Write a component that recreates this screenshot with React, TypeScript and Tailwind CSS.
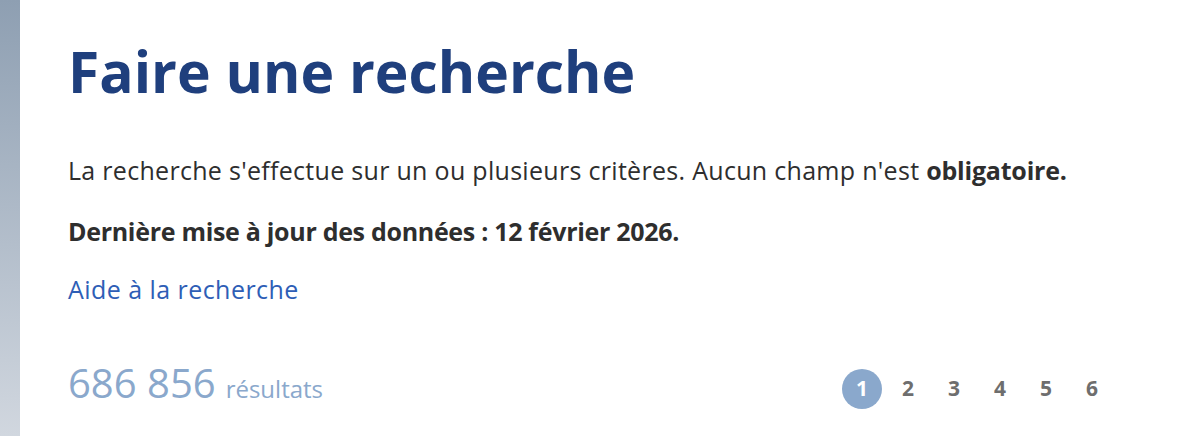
export default function App() {
  const pages = [1, 2, 3, 4, 5, 6];
  return (
    <div className="flex h-[436px] w-[1200px] overflow-hidden bg-white" style={{ fontFamily: "'Open Sans', 'Noto Sans', sans-serif" }}>
      <div className="w-[20px] shrink-0 bg-gradient-to-b from-[#8e9fb2] to-[#d1d7df]" />
      <div className="flex flex-1 flex-col pl-[48px] pr-[88px] pt-[37px]">
        <h1 className="text-[57px] font-bold leading-[68px] text-[#1f3f7d]">Faire une recherche</h1>
        <p className="mt-[47px] text-[25px] leading-[36px] tracking-[0.3px] text-[#2e2e2e]">
          La recherche s'effectue sur un ou plusieurs critères. Aucun champ n'est{" "}
          <strong className="tracking-[-0.2px]">obligatoire.</strong>
        </p>
        <p className="mt-[25px] text-[25px] font-bold leading-[36px] tracking-[-0.3px] text-[#2e2e2e]">
          Dernière mise à jour des données : 12 février 2026.
        </p>
        <a className="mt-[22px] text-[25px] leading-[36px] tracking-[0.45px] text-[#2e5eb6]">Aide à la recherche</a>
        <div className="mt-[56px] flex items-start justify-between">
          <div className="flex items-baseline gap-[10px] text-[#8aa8cc]">
            <span className="text-[40px] leading-[40px]">686 856</span>
            <span className="text-[24px]">résultats</span>
          </div>
          <div className="mt-[6px] flex items-center gap-[6px]">
            {pages.map((p) => (
              <span
                key={p}
                className={
                  p === 1
                    ? "flex h-[40px] w-[40px] items-center justify-center rounded-full bg-[#8aa8cc] text-[21px] font-bold text-white"
                    : "flex h-[40px] w-[40px] items-center justify-center text-[21px] font-bold text-[#6e6e6e]"
                }
              >
                {p}
              </span>
            ))}
          </div>
        </div>
      </div>
    </div>
  );
}
